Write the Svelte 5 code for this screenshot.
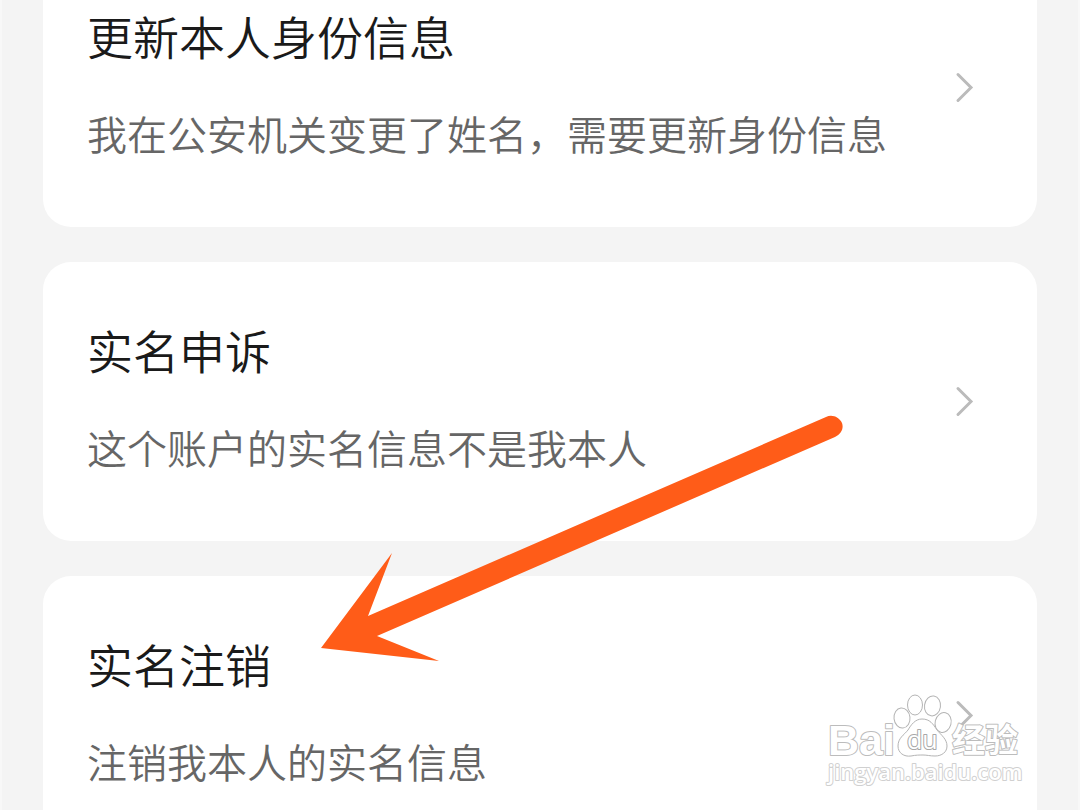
<script>
  const items = [
    { title: '更新本人身份信息', note: '我在公安机关变更了姓名，需要更新身份信息' },
    { title: '实名申诉', note: '这个账户的实名信息不是我本人' },
    { title: '实名注销', note: '注销我本人的实名信息' }
  ];
</script>

<main class="screen">
  <div class="list">
    {#each items as item}
      <button class="card" type="button">
        <span class="text">
          <span class="title">{item.title}</span>
          <span class="note">{item.note}</span>
        </span>
        <svg class="chevron" viewBox="0 0 20 32" aria-hidden="true">
          <path d="M3 3.500 L16 16.500 L3 29.500" />
        </svg>
      </button>
    {/each}
  </div>

  <svg class="arrow" viewBox="0 0 524 248" aria-hidden="true">
    <path
      d="M2 235 L73 140 L49 203 L507 4 C513 1 520 4 523 10 C525 16 522 21 516 24 L58 223 L120 248 Z"
    />
  </svg>

  <svg class="watermark" viewBox="0 0 200 100" role="img" aria-label="Baidu 经验">
    <text class="latin" x="1" y="65">Bai</text>
    <g class="paw">
      <ellipse cx="75" cy="28" rx="8" ry="10" transform="rotate(-6 75 28)" />
      <ellipse cx="88" cy="15" rx="7.5" ry="10" />
      <ellipse cx="105.500" cy="16" rx="8" ry="10" transform="rotate(8 106 16)" />
      <ellipse cx="116" cy="32.500" rx="8" ry="10" transform="rotate(14 116 33)" />
      <path
        d="M95 29 C88 29 84 35 81 40 C77 45 71 48 71 56 C71 63 77 67 84 66 C89 65 92 65 96 65 C100 65 103 66 108 66 C115 66 120 62 120 56 C120 49 114 45 110 40 C106 34 103 29 95 29 Z"
      />
    </g>
    <text class="du" x="80" y="59">du</text>
    <text class="hanzi" x="125" y="62">经验</text>
    <text class="url" x="1" y="90">jingyan.baidu.com</text>
  </svg>
</main>

<style>
  :global(body) {
    margin: 0;
    background: #f4f4f4;
  }

  .screen {
    position: relative;
    box-sizing: border-box;
    height: 100vh;
    overflow: hidden;
    padding: 0 41px;
    border: solid #f8f8f8;
    border-width: 0 2px;
    font-family: 'Noto Sans CJK SC', sans-serif;
  }

  /* The list is scrolled so that the first card runs under the top edge. */
  .list {
    display: flex;
    flex-direction: column;
    gap: 35px;
    margin-top: -52px;
  }

  .card {
    display: flex;
    align-items: center;
    justify-content: space-between;
    padding: 57px 62px 66px 44px;
    border: 0;
    border-radius: 28px;
    background: #fff;
    font: inherit;
    text-align: left;
    cursor: pointer;
  }

  .text {
    display: flex;
    flex-direction: column;
    gap: 40px;
  }

  .title {
    font-size: 46px;
    line-height: 60px;
    font-weight: 350;
    color: #1a1a1a;
  }

  .note {
    font-size: 40px;
    line-height: 56px;
    font-weight: 350;
    color: #666;
    white-space: nowrap;
  }

  .chevron {
    flex: none;
    align-self: flex-start;
    width: 20px;
    height: 32px;
    margin-top: 66px;
    fill: none;
    stroke: #bbb;
    stroke-width: 3;
    stroke-linecap: round;
  }

  .arrow {
    position: absolute;
    left: 317px;
    top: 413px;
    width: 524px;
    height: 248px;
    fill: #ff5c18;
    pointer-events: none;
  }

  .watermark {
    position: absolute;
    right: 51px;
    bottom: 20px;
    width: 200px;
    height: 100px;
    overflow: visible;
    fill: #fff;
    stroke: #bcbcbc;
    stroke-width: 2;
    stroke-linejoin: round;
    paint-order: stroke;
    pointer-events: none;
  }

  .watermark .paw {
    stroke: #b4b4b4;
    stroke-width: 1;
    paint-order: normal;
  }

  .watermark .latin {
    font-family: 'Liberation Sans', sans-serif;
    font-size: 43px;
    font-weight: 700;
  }

  .watermark .du {
    font-family: 'Open Sans', sans-serif;
    font-size: 25px;
    font-weight: 500;
    stroke: #a8a8a8;
  }

  .watermark .hanzi {
    font-size: 33px;
    font-weight: 700;
  }

  .watermark .url {
    font-family: 'Open Sans', sans-serif;
    font-size: 22px;
    font-weight: 600;
    stroke: #d0d0d0;
  }
</style>
